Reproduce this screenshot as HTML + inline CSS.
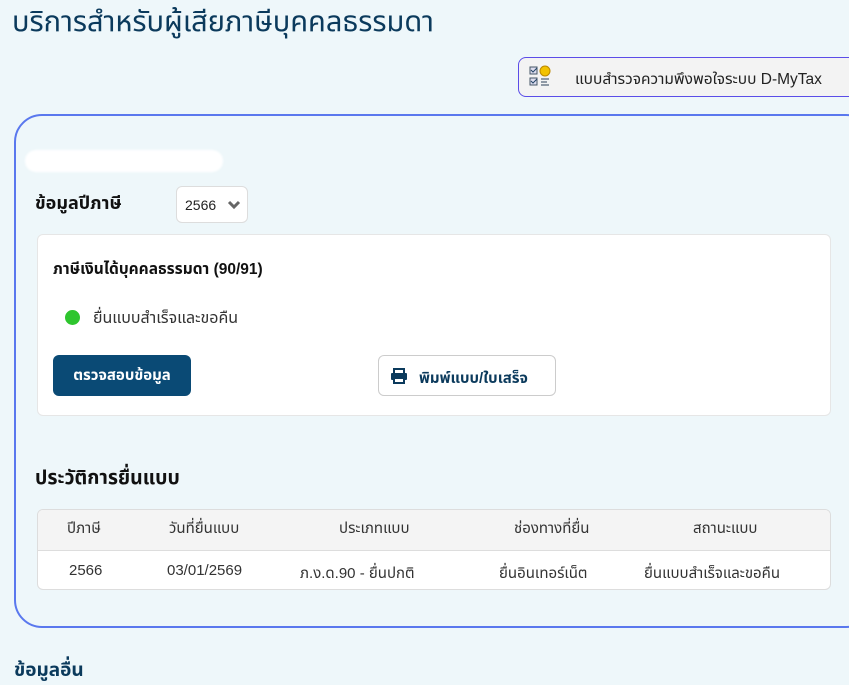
<!DOCTYPE html>
<html><head><meta charset="utf-8"><style>
body{margin:0;width:849px;height:664px;overflow:hidden;background:#eef7fa;font-family:"Liberation Sans","Noto Sans CJK SC","Noto Sans Thai",sans-serif;position:relative;color:#222}
.a{position:absolute}
</style></head><body>
<div class="a" style="left:12px;top:1px;font-size:29px;color:#0b3a5c;">บริการสำหรับผู้เสียภาษีบุคคลธรรมดา</div>
<div class="a" style="left:518px;top:57px;width:340px;height:40px;border:1.5px solid #5b4de8;border-radius:8px;background:#f3f3f3;box-sizing:border-box;">
  <svg class="a" style="left:9px;top:7px" width="28" height="24" viewBox="0 0 28 24">
    <rect x="2" y="2" width="7" height="7" fill="#dde" stroke="#456" stroke-width="1"/><path d="M3 5l2 2 4-4" stroke="#246" fill="none"/>
    <rect x="2" y="13" width="7" height="7" fill="#dde" stroke="#456" stroke-width="1"/><path d="M3 16l2 2 4-4" stroke="#246" fill="none"/>
    <circle cx="17" cy="6" r="5" fill="#f2c200" stroke="#b80"/>
    <path d="M13 14h8M13 17h6M13 20h8" stroke="#567" stroke-width="1.3"/>
  </svg>
  <div class="a" style="left:56px;top:10px;font-size:15.5px;color:#222">แบบสำรวจความพึงพอใจระบบ D-MyTax</div>
</div>
<div class="a" style="left:14px;top:114px;width:860px;height:514px;border:2px solid #5a78ee;border-radius:28px;box-sizing:border-box;"></div>
<div class="a" style="left:25px;top:150px;width:198px;height:22px;background:#fff;border-radius:11px;filter:blur(1px)"></div>
<div class="a" style="left:35px;top:191px;font-size:18px;font-weight:bold;color:#111">ข้อมูลปีภาษี</div>
<div class="a" style="left:176px;top:186px;width:72px;height:37px;background:#fff;border:1px solid #ddd;border-radius:6px;box-sizing:border-box">
  <span class="a" style="left:8px;top:10px;font-size:14px">2566</span>
  <svg class="a" style="left:50px;top:13px" width="14" height="11" viewBox="0 0 14 11"><path d="M2 2l5 5 5-5" stroke="#666" stroke-width="3" fill="none"/></svg>
</div>
<div class="a" style="left:37px;top:234px;width:794px;height:182px;background:#fff;border:1px solid #e6e6e6;border-radius:6px;box-sizing:border-box"></div>
<div class="a" style="left:53px;top:258px;font-size:15.5px;font-weight:bold;color:#111">ภาษีเงินได้บุคคลธรรมดา (90/91)</div>
<div class="a" style="left:65px;top:310px;width:15px;height:15px;border-radius:50%;background:#2ec52e"></div>
<div class="a" style="left:93px;top:307px;font-size:16px;color:#333">ยื่นแบบสำเร็จและขอคืน</div>
<div class="a" style="left:53px;top:355px;width:138px;height:41px;background:#0a4a75;border-radius:6px;color:#fff;font-size:15px;font-weight:bold;text-align:center;line-height:41px">ตรวจสอบข้อมูล</div>
<div class="a" style="left:378px;top:355px;width:178px;height:41px;background:#fff;border:1px solid #ccc;border-radius:6px;box-sizing:border-box">
  <svg class="a" style="left:11px;top:12px" width="18" height="16" viewBox="0 0 18 16"><rect x="4" y="1" width="10" height="5" fill="none" stroke="#0b3a5c" stroke-width="2"/><rect x="1" y="5" width="16" height="7" rx="1" fill="#0b3a5c"/><rect x="4" y="10" width="10" height="5" fill="#fff" stroke="#0b3a5c" stroke-width="2"/></svg>
  <div class="a" style="left:40px;top:11px;font-size:15px;font-weight:bold;color:#0b3a5c">พิมพ์แบบ/ใบเสร็จ</div>
</div>
<div class="a" style="left:35px;top:463px;font-size:19.5px;font-weight:bold;color:#111">ประวัติการยื่นแบบ</div>
<div class="a" style="left:37px;top:509px;width:794px;height:81px;background:#fff;border:1px solid #ddd;border-radius:6px;box-sizing:border-box;overflow:hidden">
  <div style="height:40px;background:#f4f4f4;border-bottom:1px solid #ddd"></div>
</div>
<div class="a" style="top:517px;font-size:15px;color:#333;width:849px;height:80px">
  <span class="a" style="left:67px">ปีภาษี</span>
  <span class="a" style="left:169px">วันที่ยื่นแบบ</span>
  <span class="a" style="left:339px">ประเภทแบบ</span>
  <span class="a" style="left:514px">ช่องทางที่ยื่น</span>
  <span class="a" style="left:693px">สถานะแบบ</span>
  <span class="a" style="left:69px;top:45px">2566</span>
  <span class="a" style="left:167px;top:45px">03/01/2569</span>
  <span class="a" style="left:300px;top:45px">ภ.ง.ด.90 - ยื่นปกติ</span>
  <span class="a" style="left:499px;top:45px">ยื่นอินเทอร์เน็ต</span>
  <span class="a" style="left:644px;top:45px">ยื่นแบบสำเร็จและขอคืน</span>
</div>
<div class="a" style="left:14px;top:656px;font-size:19px;font-weight:bold;color:#0b3a5c">ข้อมูลอื่น</div>
</body></html>
